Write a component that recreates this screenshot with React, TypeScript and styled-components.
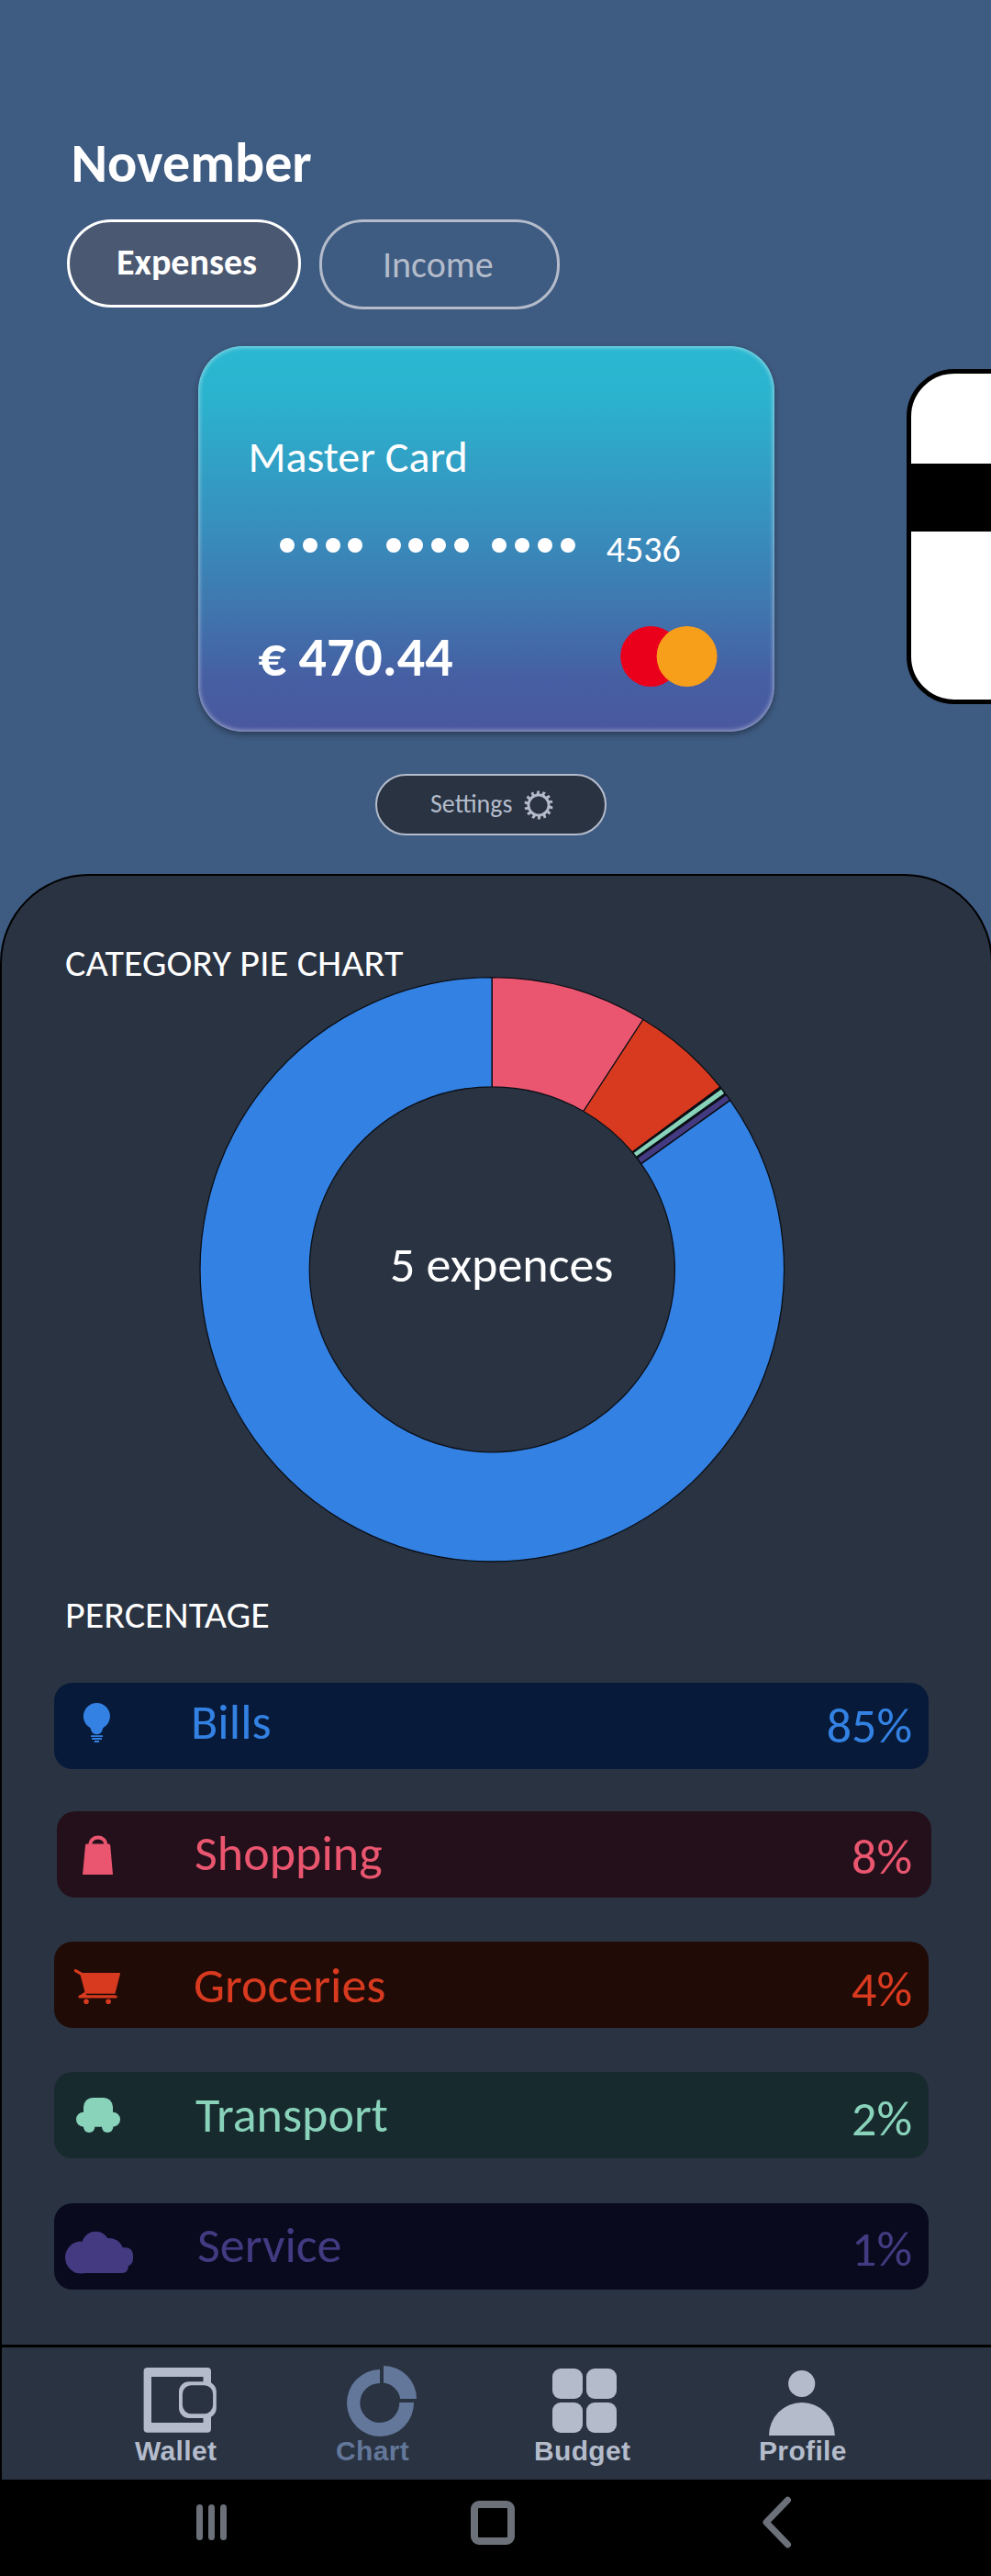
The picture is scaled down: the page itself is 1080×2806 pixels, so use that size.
import React from "react";
import styled, { createGlobalStyle } from "styled-components";

const INK = "#b4bccb";
const PANEL = "#2a3342";
const SKY = "#3e5b81";

const GlobalStyle = createGlobalStyle`
  body { margin: 0; background: ${SKY}; }
  * { box-sizing: border-box; }
  svg { display: block; flex: none; }
`;

const Screen = styled.div`
  width: 1080px;
  height: 2806px;
  overflow: hidden;
  display: flex;
  flex-direction: column;
  background: ${SKY};
  color: #fff;
  font-family: Carlito, Calibri, "Open Sans", sans-serif;
  line-height: 1;
  white-space: nowrap;
`;

/* ---------- header ---------- */

const Header = styled.header`
  padding: 148px 0 0 73px;
`;

const Month = styled.h1`
  margin: 0 0 31px 4.5px;
  font-size: 60px;
  line-height: 60px;
  font-weight: 700;
`;

const Tabs = styled.nav`
  display: flex;
  align-items: flex-start;
  gap: 20px;
`;

const Tab = styled.button<{ $active?: boolean }>`
  display: flex;
  align-items: flex-start;
  width: ${(p) => (p.$active ? 255 : 262)}px;
  height: ${(p) => (p.$active ? 96 : 98)}px;
  padding: ${(p) => (p.$active ? "24px 0 0 51px" : "27px 0 0 66px")};
  border: 3px solid ${(p) => (p.$active ? "#fff" : INK)};
  border-radius: 48px;
  background: ${(p) => (p.$active ? "#4a5871" : "transparent")};
  color: ${(p) => (p.$active ? "#fff" : INK)};
  font: ${(p) => (p.$active ? 700 : 400)} 40px/40px Carlito, Calibri, "Open Sans", sans-serif;
`;

/* ---------- cards ---------- */

const Carousel = styled.section`
  display: flex;
  align-items: flex-start;
  gap: 144px;
  margin-top: 40px;
  padding-left: 216px;
`;

const BankCard = styled.article`
  flex: none;
  width: 628px;
  height: 420px;
  padding-top: 97px;
  border-radius: 49px;
  background: linear-gradient(180deg, #2ab8d1 0%, #2bb3ce 13%, #3692bf 44%, #3f76ae 68%, #465fa3 86%, #4a589e 100%);
  box-shadow:
    inset 0 0 5px 1px rgba(255, 255, 255, 0.5),
    0 3px 6px rgba(0, 0, 0, 0.35);
`;

const CardName = styled.div`
  margin-left: 54.5px;
  font-size: 48px;
  line-height: 48px;
`;

const CardNumber = styled.div`
  display: flex;
  align-items: flex-start;
  gap: 25.2px;
  height: 40px;
  margin: 56px 0 0 89px;
`;

const DotGroup = styled.span`
  display: flex;
  gap: 8.8px;
  padding-top: 8px;
`;

const Dot = styled.i`
  width: 16px;
  height: 16px;
  border-radius: 50%;
  background: #fff;
`;

const LastDigits = styled.span`
  margin: 1px 0 0 9px;
  font-size: 40px;
  line-height: 40px;
`;

const CardFooter = styled.div`
  display: flex;
  align-items: flex-start;
  justify-content: space-between;
  margin-top: 64px;
  padding: 0 62px 0 65.5px;
`;

const Amount = styled.div`
  margin-top: 4px;
  font-size: 60px;
  line-height: 60px;
  font-weight: 700;
`;

const NextCard = styled.article`
  flex: none;
  width: 628px;
  height: 365px;
  margin-top: 25px;
  padding-top: 98px;
  border: 5px solid #000;
  border-radius: 52px;
  background: #fff;
`;

const Stripe = styled.div`
  height: 74px;
  background: #000;
`;

const SettingsButton = styled.button`
  display: flex;
  align-items: flex-start;
  flex: none;
  gap: 12px;
  width: 252px;
  height: 67px;
  margin: 46px 0 0 409px;
  padding: 15px 0 0 58px;
  border: 2px solid ${INK};
  border-radius: 34px;
  background: ${PANEL};
  color: ${INK};
  font: 400 28px/28px Carlito, Calibri, "Open Sans", sans-serif;
`;

const SettingsLabel = styled.span`
  margin-top: 2px;
`;

/* ---------- panel ---------- */

const Panel = styled.main`
  display: flex;
  flex-direction: column;
  flex: none;
  width: 1082px;
  height: 1749px;
  margin-top: 42px;
  padding-top: 74px;
  border: 2px solid #000;
  border-bottom: 0;
  border-radius: 97px 97px 0 0;
  background: ${PANEL};
`;

const SectionTitle = styled.h2`
  margin: 0 0 0 69px;
  font-size: 42px;
  line-height: 42px;
  font-weight: 400;
`;

const ChartArea = styled.div`
  display: grid;
  width: 640px;
  height: 640px;
  margin: -7px 0 35px 214px;
  > * {
    grid-area: 1 / 1;
  }
`;

const ChartLabel = styled.div`
  z-index: 1;
  padding: 288px 0 0 209px;
  font-size: 54px;
  line-height: 54px;
`;

const Rows = styled.ul`
  list-style: none;
  margin: 53px 0 0;
  padding: 0;
`;

const Row = styled.li<{ $bg: string; $fg: string; $gap: number; $shift: number }>`
  display: flex;
  align-items: flex-start;
  width: 953px;
  height: 94px;
  margin: ${(p) => p.$gap}px 0 0 ${(p) => 57 + p.$shift}px;
  padding-right: ${(p) => 18 + p.$shift}px;
  border-radius: 20px;
  background: ${(p) => p.$bg};
  color: ${(p) => p.$fg};
  font-size: 54px;
  line-height: 54px;
`;

const RowName = styled.span<{ $x: number; $y: number }>`
  margin: ${(p) => p.$y}px 0 0 ${(p) => p.$x}px;
`;

const RowValue = styled.span<{ $y: number }>`
  margin: ${(p) => p.$y}px 0 0 auto;
`;

/* ---------- bottom bars ---------- */

const NavBar = styled.nav`
  display: flex;
  align-items: flex-start;
  height: 147px;
  margin-top: auto;
  padding: 15px 0 0 145px;
  border-top: 3px solid #000;
`;

const NavItem = styled.a<{ $active?: boolean; $gap: number }>`
  display: flex;
  flex-direction: column;
  width: 96px;
  margin-left: ${(p) => p.$gap}px;
  color: ${(p) => (p.$active ? "#63779a" : INK)};
  font: 700 30px/30px "Liberation Sans", Arial, sans-serif;
  letter-spacing: 0.35px;
`;

const NavLabel = styled.span`
  margin-top: -1px;
`;

const SystemBar = styled.footer`
  display: flex;
  align-items: center;
  flex: none;
  height: 105px;
  padding: 0 0 12px 214px;
  background: #000;
  color: #6b7079;
`;

const RecentsButton = styled.div`
  display: flex;
  gap: 6px;
  margin-right: 266px;
`;

const RecentsLine = styled.i`
  width: 7px;
  height: 39px;
  border-radius: 3.5px;
  background: currentColor;
`;

const HomeButton = styled.div`
  width: 48px;
  height: 48px;
  margin-right: 270px;
  border: 8px solid currentColor;
  border-radius: 9px;
`;

/* ---------- drawings ---------- */

const gearPath = () => {
  const teeth = 14;
  const pts: string[] = [];
  for (let i = 0; i < teeth; i++) {
    const base = (i / teeth) * Math.PI * 2 - Math.PI / 2;
    const steps: [number, number][] = [
      [-0.2, 12.8],
      [-0.13, 16],
      [0.09, 16],
      [0.09, 12.8],
    ];
    steps.forEach(([a, r]) => {
      pts.push(`${(17 + Math.cos(base + a) * r).toFixed(2)} ${(17 + Math.sin(base + a) * r).toFixed(2)}`);
    });
  }
  return `M${pts.join("L")}ZM26.3 17A9.3 9.3 0 1 0 7.7 17A9.3 9.3 0 1 0 26.3 17Z`;
};

const Gear = () => (
  <svg width="34" height="34" viewBox="0 0 34 34">
    <path d={gearPath()} fill={INK} fillRule="evenodd" stroke="#10141b" strokeWidth="0.5" />
  </svg>
);

const MasterLogo = () => (
  <svg width="106" height="66" viewBox="0 0 106 66">
    <circle cx="33.2" cy="33" r="33" fill="#eb001b" />
    <circle cx="72.6" cy="33" r="33" fill="#f79e1b" />
  </svg>
);

const Donut = () => (
  <svg width="640" height="640" viewBox="-320.3 -319.8 640 640" stroke="#0b0f16" strokeWidth="1.3" strokeLinejoin="round">
    <path
      fill="#3381e3"
      d="M259.3 -184.4A318.2 318.2 0 1 1 0 -318.2V-199A199 199 0 1 0 162.3 -115.2Z"
    />
    <path fill="#ea566f" d="M0 -318.2A318.2 318.2 0 0 1 164.6 -272.3L99.6 -172.3A199 199 0 0 0 0 -199Z" />
    <path fill="#d83a1f" d="M164.6 -272.3A318.2 318.2 0 0 1 248.6 -198.8L152.8 -127.8A199 199 0 0 0 99.6 -172.3Z" />
    <path fill="#0b0f16" d="M248.6 -198.8L259.3 -184.4L162.3 -115.2L152.8 -127.8Z" />
    <path fill="#89d3bb" d="M249.8 -197.2L253.6 -191.6L157.2 -122.4L153.6 -127Z" />
    <path fill="#433a81" d="M255.1 -190.4L259.3 -184.4L162.3 -115.2L158 -121.4Z" />
  </svg>
);

const RowIcon = ({ children }: { children: React.ReactNode }) => (
  <svg width="92" height="94" viewBox="0 0 92 94" fill="currentColor">
    {children}
  </svg>
);

const Bulb = () => (
  <RowIcon>
    <path d="M46.4 22A14.5 14.5 0 0 1 60.9 36.5C60.9 42 58 46.2 54.2 48.6C52.8 49.6 53 50.5 52.4 52.2C51.4 54.6 49 56.2 46.4 56.2C43.8 56.2 41.4 54.6 40.4 52.2C39.8 50.5 40 49.6 38.6 48.6C34.8 46.2 31.9 42 31.9 36.5A14.5 14.5 0 0 1 46.4 22Z" />
    <rect x="39.9" y="57.2" width="13.2" height="1.8" rx="0.6" />
    <rect x="41" y="60" width="11" height="2" rx="0.6" />
    <rect x="43.8" y="63" width="5.3" height="2" rx="0.6" />
  </RowIcon>
);

const Bag = () => (
  <RowIcon>
    <path d="M31 37Q31.2 35.5 32.6 35.5H56.6Q58 35.5 58.2 37L61 69H28Z" />
    <path d="M36.4 36.5C36.4 25.8 53.2 25.8 53.2 36.5" fill="none" stroke="currentColor" strokeWidth="3.8" />
  </RowIcon>
);

const Cart = () => (
  <RowIcon>
    <path d="M29 34H71.3Q72.2 34 72 35L66.4 56.8H34L28.2 35Z" />
    <path d="M23.4 31.6L30.5 35.6M28 60H67.2" fill="none" stroke="currentColor" strokeWidth="3.2" strokeLinecap="round" />
    <path d="M26.4 59.4L34 54.6L35.4 58.4H66V60H27Z" />
    <rect x="35" y="56.9" width="31" height="1" fill="#210b07" />
    <circle cx="35" cy="65.3" r="2.8" />
    <circle cx="59.1" cy="65.3" r="2.8" />
  </RowIcon>
);

const Car = () => (
  <RowIcon>
    <rect x="32" y="28" width="32" height="28" rx="10" />
    <rect x="24" y="43.7" width="48" height="16" rx="8" />
    <rect x="32" y="48" width="12.3" height="18" rx="6.1" />
    <rect x="52" y="48" width="12.3" height="18" rx="6.1" />
  </RowIcon>
);

const Cloud = () => (
  <RowIcon>
    <circle cx="29.5" cy="59" r="17.5" />
    <circle cx="45.3" cy="46" r="15.2" />
    <circle cx="60" cy="53.6" r="15.6" />
    <rect x="64" y="48.2" width="22" height="20.6" rx="8" />
    <path d="M16 70L40 50L80.7 60V70A6 6 0 0 1 74.7 76H26Q22.5 76 20.5 74Z" />
  </RowIcon>
);

const NavIcon = ({ children }: { children: React.ReactNode }) => (
  <svg width="96" height="84" viewBox="0 0 96 84" fill="currentColor">
    {children}
  </svg>
);

const WalletIcon = () => (
  <NavIcon>
    <rect x="9.6" y="7" width="73.4" height="70.7" rx="4" />
    <rect x="18" y="17" width="56.5" height="50" fill={PANEL} />
    <rect x="48" y="22.2" width="40.8" height="39.8" rx="11" />
    <rect x="51.9" y="26.3" width="33.2" height="31" rx="9.5" fill={PANEL} />
  </NavIcon>
);

const ChartIcon = () => (
  <NavIcon>
    <path d="M48 9A36.5 36.5 0 1 0 85 45H69.3A21.5 21.5 0 1 1 48 24Z" />
    <path d="M52 5A36 36 0 0 1 88 41H70.2A21 21 0 0 0 52 23.5Z" />
  </NavIcon>
);

const BudgetIcon = () => (
  <NavIcon>
    <rect x="20" y="8" width="33" height="33" rx="9" />
    <rect x="57" y="8" width="33" height="33" rx="9" />
    <rect x="20" y="45" width="33" height="33" rx="9" />
    <rect x="57" y="45" width="33" height="33" rx="9" />
  </NavIcon>
);

const ProfileIcon = () => (
  <NavIcon>
    <circle cx="46.7" cy="24.5" r="14.6" />
    <path d="M11 81A35.9 36 0 0 1 82.8 81Z" />
  </NavIcon>
);

const BackIcon = () => (
  <svg width="32" height="57" viewBox="0 0 32 57">
    <path
      d="M27.5 4.3L4 28.5L27.5 52.7"
      fill="none"
      stroke="currentColor"
      strokeWidth="7"
      strokeLinecap="round"
      strokeLinejoin="round"
    />
  </svg>
);

/* ---------- data ---------- */

const categories = [
  { name: "Bills", value: "85%", fg: "#3381e3", bg: "#071a39", icon: <Bulb />, gap: 0, shift: 0, x: 57, y: 16, vy: 20 },
  { name: "Shopping", value: "8%", fg: "#ea566f", bg: "#24101a", icon: <Bag />, gap: 46, shift: 3, x: 58, y: 19, vy: 23 },
  { name: "Groceries", value: "4%", fg: "#d83a1f", bg: "#210b07", icon: <Cart />, gap: 48, shift: 0, x: 60, y: 21, vy: 25 },
  { name: "Transport", value: "2%", fg: "#89d3bb", bg: "#172a2e", icon: <Car />, gap: 48, shift: 0, x: 62, y: 20, vy: 24 },
  { name: "Service", value: "1%", fg: "#433a81", bg: "#0a0a1e", icon: <Cloud />, gap: 49, shift: 0, x: 64, y: 19, vy: 23 },
];

const navItems = [
  { name: "Wallet", icon: <WalletIcon />, gap: 0 },
  { name: "Chart", icon: <ChartIcon />, gap: 123, active: true },
  { name: "Budget", icon: <BudgetIcon />, gap: 120 },
  { name: "Profile", icon: <ProfileIcon />, gap: 149 },
];

export default function App() {
  return (
    <Screen>
      <GlobalStyle />
      <Header>
        <Month>November</Month>
        <Tabs>
          <Tab $active>Expenses</Tab>
          <Tab>Income</Tab>
        </Tabs>
      </Header>

      <Carousel>
        <BankCard>
          <CardName>Master Card</CardName>
          <CardNumber>
            {[0, 1, 2].map((g) => (
              <DotGroup key={g}>
                {[0, 1, 2, 3].map((d) => (
                  <Dot key={d} />
                ))}
              </DotGroup>
            ))}
            <LastDigits>4536</LastDigits>
          </CardNumber>
          <CardFooter>
            <Amount>€ 470.44</Amount>
            <MasterLogo />
          </CardFooter>
        </BankCard>
        <NextCard>
          <Stripe />
        </NextCard>
      </Carousel>

      <SettingsButton>
        <SettingsLabel>Settings</SettingsLabel>
        <Gear />
      </SettingsButton>

      <Panel>
        <SectionTitle>CATEGORY PIE CHART</SectionTitle>
        <ChartArea>
          <Donut />
          <ChartLabel>5 expences</ChartLabel>
        </ChartArea>
        <SectionTitle>PERCENTAGE</SectionTitle>
        <Rows>
          {categories.map((c) => (
            <Row key={c.name} $bg={c.bg} $fg={c.fg} $gap={c.gap} $shift={c.shift}>
              {c.icon}
              <RowName $x={c.x} $y={c.y}>
                {c.name}
              </RowName>
              <RowValue $y={c.vy}>{c.value}</RowValue>
            </Row>
          ))}
        </Rows>
        <NavBar>
          {navItems.map((n) => (
            <NavItem key={n.name} $gap={n.gap} $active={n.active}>
              {n.icon}
              <NavLabel>{n.name}</NavLabel>
            </NavItem>
          ))}
        </NavBar>
      </Panel>

      <SystemBar>
        <RecentsButton>
          <RecentsLine />
          <RecentsLine />
          <RecentsLine />
        </RecentsButton>
        <HomeButton />
        <BackIcon />
      </SystemBar>
    </Screen>
  );
}
